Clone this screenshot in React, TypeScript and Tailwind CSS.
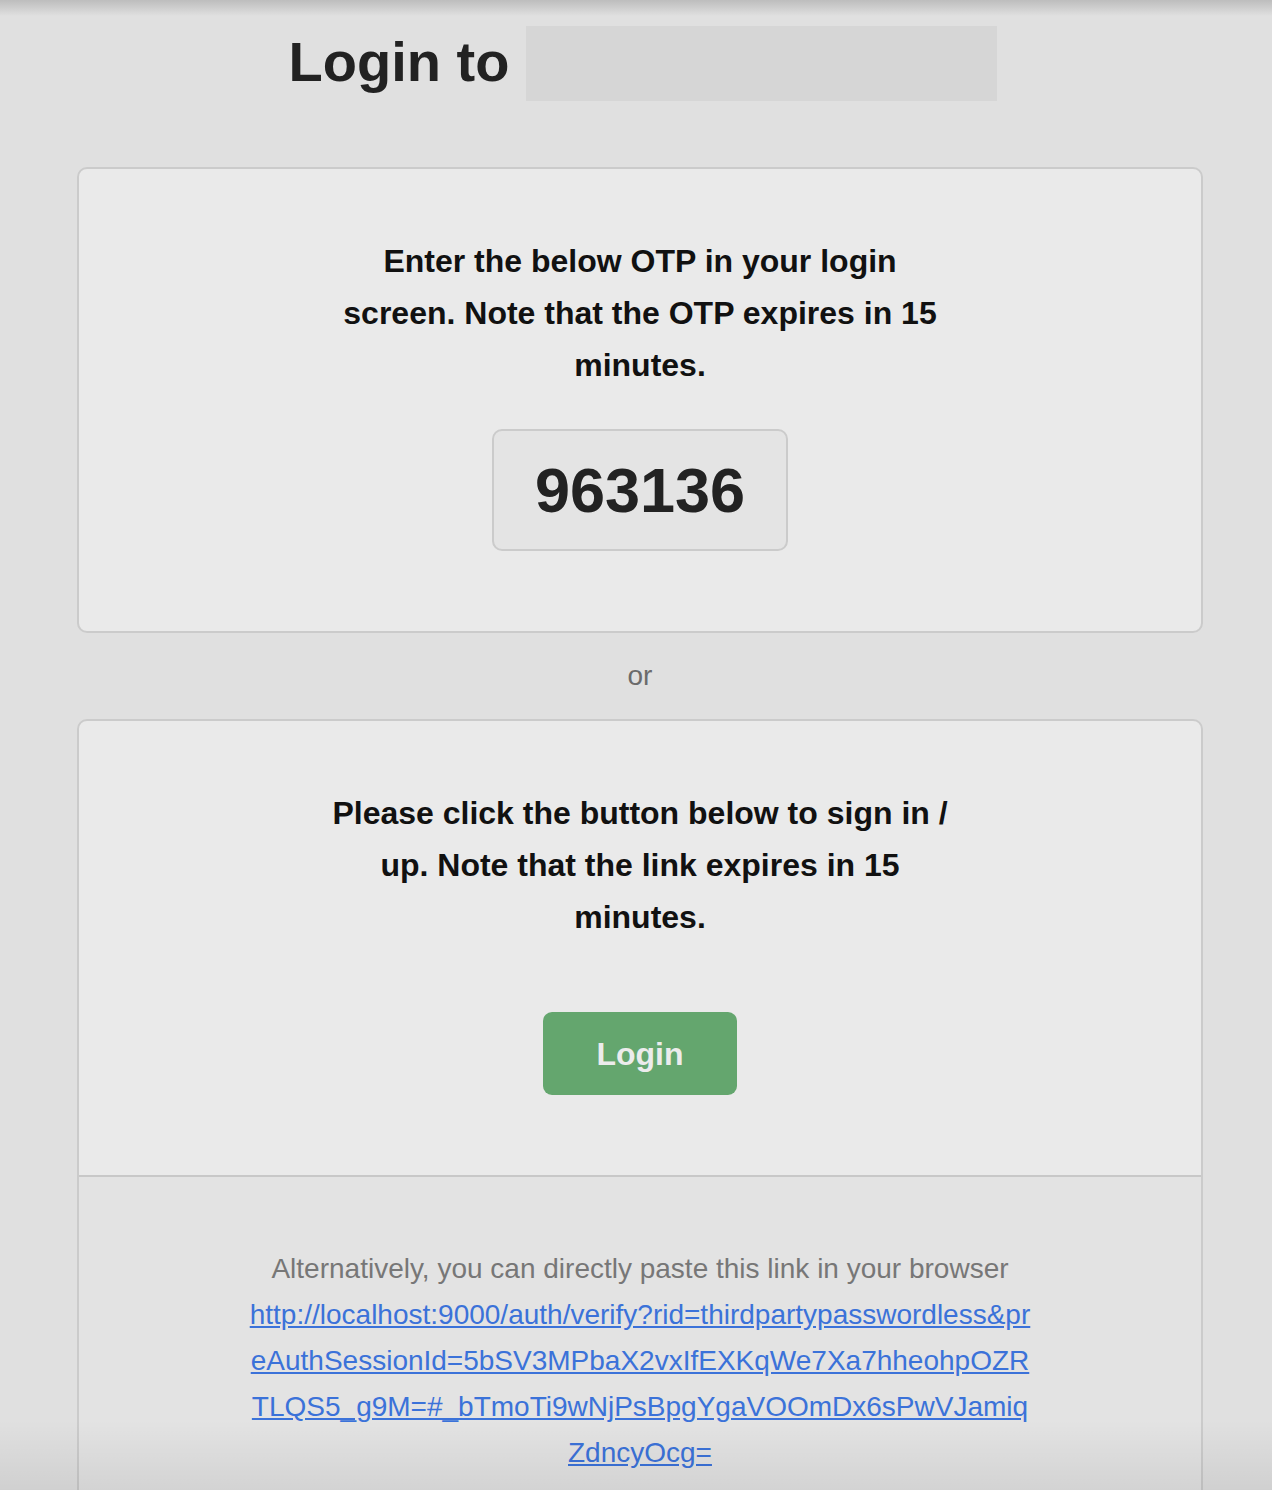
const linkLines = [
  "http://localhost:9000/auth/verify?rid=thirdpartypasswordless&pr",
  "eAuthSessionId=5bSV3MPbaX2vxIfEXKqWe7Xa7hheohpOZR",
  "TLQS5_g9M=#_bTmoTi9wNjPsBpgYgaVOOmDx6sPwVJamiq",
  "ZdncyOcg=",
];

export default function App() {
  return (
    <div
      className="relative min-h-[1490px] overflow-hidden bg-[#e0e0e0] pt-[26px] font-['Liberation_Sans',Arial,sans-serif]"
    >
      {/* top shade */}
      <div className="pointer-events-none absolute inset-x-0 top-0 h-[16px] bg-gradient-to-b from-[#bdbdbd] to-[#e0e0e0]" />

      <div className="ml-[77px] w-[1126px]">
        {/* header */}
        <div className="flex items-center justify-center gap-[17px] pl-[6px]">
          <h1 className="-mt-[3px] text-[56px] font-bold leading-none text-[#222]">Login to</h1>
          <div className="h-[75px] w-[471px] bg-[#d6d6d6]" />
        </div>

        {/* OTP card */}
        <div className="mt-[66px] flex flex-col items-center rounded-[10px] border-2 border-[#cbcbcb] bg-[#eaeaea] pt-[66px] pb-[80px]">
          <p className="w-[625px] text-center text-[32px] font-bold leading-[52px] text-[#111]">
            Enter the below OTP in your login screen. Note that the OTP expires in 15 minutes.
          </p>
          <div className="mt-[38px] flex h-[122px] w-[296px] items-center justify-center rounded-[10px] border-2 border-[#cbcbcb] bg-[#e4e4e4]">
            <span className="text-[63px] font-bold leading-none text-[#222]">963136</span>
          </div>
        </div>

        <div className="py-[24px] text-center text-[28px] leading-[38px] text-[#6b6b6b]">or</div>

        {/* magic link card */}
        <div className="overflow-hidden rounded-[10px] border-2 border-[#cbcbcb] bg-[#eaeaea]">
          <div className="flex flex-col items-center pt-[66px] pb-[80px]">
            <p className="w-[625px] text-center text-[32px] font-bold leading-[52px] text-[#111]">
              Please click the button below to sign in / up. Note that the link expires in 15 minutes.
            </p>
            <button className="mt-[69px] h-[83px] w-[194px] rounded-[9px] bg-[#64a66e] text-[32px] font-bold text-[#ececec]">
              Login
            </button>
          </div>
          <div className="border-t-2 border-[#c8c8c8] bg-[#e3e3e3] pt-[69px] pb-[80px] text-center">
            <p className="text-[28px] leading-[46px] text-[#777]">
              Alternatively, you can directly paste this link in your browser
            </p>
            <a href="#" className="text-[28px] leading-[46px] text-[#3b72d9] underline">
              {linkLines.map((line, i) => (
                <span key={i}>
                  {line}
                  {i < linkLines.length - 1 && <br />}
                </span>
              ))}
            </a>
          </div>
        </div>
      </div>

      {/* bottom shade */}
      <div className="pointer-events-none absolute inset-x-0 top-[1420px] h-[70px] bg-gradient-to-b from-transparent to-[rgba(0,0,0,0.07)]" />
    </div>
  );
}
